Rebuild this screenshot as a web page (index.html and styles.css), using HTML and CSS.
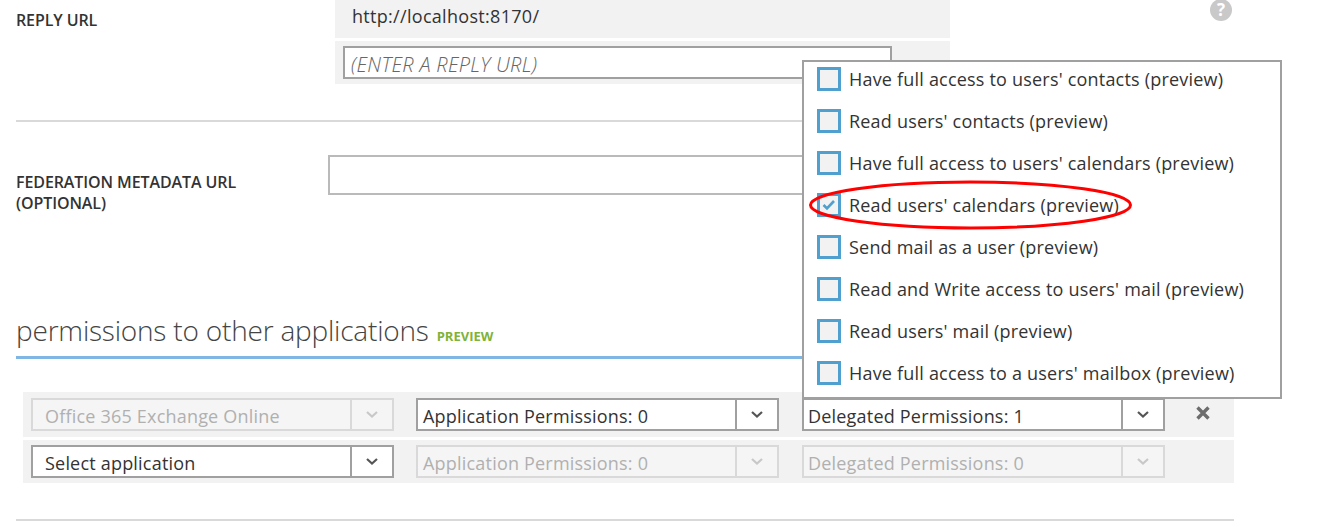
FILE: index.html
```html
<!DOCTYPE html>
<html lang="en">
<head>
  <meta charset="utf-8">
  <title>Configure application</title>
  <link rel="stylesheet" href="styles.css">
</head>
<body>
  <div class="reply-row">
    <div class="field-label reply-label">REPLY URL</div>
    <div class="reply-fields">
      <div class="reply-value">http://localhost:8170/</div>
      <div class="reply-new">
        <input class="reply-input" type="text" placeholder="(ENTER A REPLY URL)">
      </div>
    </div>
    <div class="help-icon">?</div>
  </div>
  <div class="divider"></div>

  <div class="metadata-row">
    <div class="field-label metadata-label">FEDERATION METADATA URL<br>(OPTIONAL)</div>
    <input class="metadata-input" type="text">
  </div>

  <div class="section-head">
    <h2 class="section-title">permissions to other applications</h2>
    <span class="preview-tag">PREVIEW</span>
  </div>

  <div class="perm-row perm-row-first">
    <div class="select select-app disabled">
      <span class="select-text">Office 365 Exchange Online</span>
      <span class="select-arrow"><svg width="14" height="9" viewBox="0 0 14 9"><path d="M2 2l5 4.5L12 2" /></svg></span>
    </div>
    <div class="select">
      <span class="select-text">Application Permissions: 0</span>
      <span class="select-arrow"><svg width="14" height="9" viewBox="0 0 14 9"><path d="M2 2l5 4.5L12 2" /></svg></span>
    </div>
    <div class="select select-delegated">
      <span class="select-text">Delegated Permissions: 1</span>
      <span class="select-arrow"><svg width="14" height="9" viewBox="0 0 14 9"><path d="M2 2l5 4.5L12 2" /></svg></span>
    </div>
    <svg class="remove-icon" width="16" height="16" viewBox="0 0 16 16"><path d="M2.5 2.5l11 11M13.5 2.5l-11 11" /></svg>
  </div>
  <div class="perm-row">
    <div class="select select-app">
      <span class="select-text">Select application</span>
      <span class="select-arrow"><svg width="14" height="9" viewBox="0 0 14 9"><path d="M2 2l5 4.5L12 2" /></svg></span>
    </div>
    <div class="select disabled">
      <span class="select-text">Application Permissions: 0</span>
      <span class="select-arrow"><svg width="14" height="9" viewBox="0 0 14 9"><path d="M2 2l5 4.5L12 2" /></svg></span>
    </div>
    <div class="select select-delegated disabled">
      <span class="select-text">Delegated Permissions: 0</span>
      <span class="select-arrow"><svg width="14" height="9" viewBox="0 0 14 9"><path d="M2 2l5 4.5L12 2" /></svg></span>
    </div>
  </div>
  <div class="divider"></div>

  <div class="perm-menu">
    <div class="menu-item"><span class="check"></span>Have full access to users' contacts (preview)</div>
    <div class="menu-item"><span class="check"></span>Read users' contacts (preview)</div>
    <div class="menu-item"><span class="check"></span>Have full access to users' calendars (preview)</div>
    <div class="menu-item"><span class="check"><svg width="18" height="18" viewBox="0 0 18 18"><path d="M3.5 9l3.5 3.5L14 5" /></svg></span>Read users' calendars (preview)</div>
    <div class="menu-item"><span class="check"></span>Send mail as a user (preview)</div>
    <div class="menu-item"><span class="check"></span>Read and Write access to users' mail (preview)</div>
    <div class="menu-item"><span class="check"></span>Read users' mail (preview)</div>
    <div class="menu-item"><span class="check"></span>Have full access to a users' mailbox (preview)</div>
  </div>
  <svg class="red-ring" width="330" height="54" viewBox="0 0 330 54"><ellipse cx="164.5" cy="27" rx="160" ry="23" /></svg>
</body>
</html>
```

FILE: styles.css
```css
body {
  margin: 0;
  padding-left: 16px;
  position: relative;
  font-family: "Open Sans", "Noto Sans", sans-serif;
  color: #333;
  background: white;
}

.field-label {
  font-size: 16px;
  font-weight: 600;
  line-height: 21px;
  letter-spacing: -0.1px;
  color: #333;
}

.reply-row {
  display: flex;
}
.reply-label {
  width: 319px;
  padding-top: 10px;
}
.reply-fields {
  width: 615px;
}
.reply-value {
  height: 38px;
  box-sizing: border-box;
  padding: 3px 0 0 17px;
  font-size: 18px;
  line-height: 26px;
  letter-spacing: 0.3px;
  background: #f2f2f2;
}
.reply-new {
  height: 43px;
  box-sizing: border-box;
  margin-top: 3px;
  padding: 5px 8px;
  background: #f2f2f2;
}
.reply-input {
  display: block;
  width: 549px;
  height: 33px;
  box-sizing: border-box;
  padding: 3px 6px 0 6px;
  border: 2px solid #a0a0a0;
  border-radius: 0;
  outline: none;
  font-family: inherit;
  font-size: 20px;
  font-weight: 300;
  letter-spacing: 0.3px;
  background: white;
}
.reply-input::placeholder {
  font-style: italic;
  color: #666;
  opacity: 1;
}
.help-icon {
  width: 22px;
  height: 22px;
  margin: -1px 0 0 260px;
  border-radius: 50%;
  background: #c9c9c9;
  color: white;
  font-size: 17px;
  font-weight: 700;
  line-height: 22px;
  text-align: center;
}

.divider {
  width: 1218px;
  height: 2px;
  margin-top: 36px;
  background: #d9d9d9;
}

.metadata-row {
  display: flex;
  margin-top: 33px;
}
.metadata-label {
  width: 312px;
  padding-top: 17px;
}
.metadata-input {
  display: block;
  width: 622px;
  height: 40px;
  box-sizing: border-box;
  border: 2px solid #bababa;
  border-radius: 0;
  outline: none;
}

.section-head {
  display: flex;
  align-items: baseline;
  width: 1218px;
  height: 58px;
  margin-top: 84px;
  border-bottom: 3px solid #7fb6e3;
}
.section-title {
  margin: 0;
  font-size: 28px;
  font-weight: 300;
  line-height: 64px;
  letter-spacing: -0.2px;
  color: #444;
}
.preview-tag {
  margin-left: 8px;
  font-size: 13px;
  font-weight: 700;
  color: #7fb239;
}

.perm-row {
  display: flex;
  align-items: flex-start;
  gap: 22px;
  width: 1211px;
  height: 43px;
  box-sizing: border-box;
  margin: 3px 0 0 7px;
  padding: 5px 8px;
  background: #f2f2f2;
}
.perm-row-first {
  height: 45px;
  margin-top: 33px;
  padding-top: 6px;
}

.select {
  display: flex;
  width: 363px;
  height: 33px;
  box-sizing: border-box;
  border: 2px solid #a0a0a0;
  background: white;
  font-size: 18px;
  letter-spacing: 0.2px;
  line-height: 32px;
}
.select-app .select-text {
  padding-left: 12px;
}
.select-delegated {
  margin-left: 1px;
}
.select-delegated .select-text {
  padding-left: 4px;
}
.select-text {
  flex: 1;
  padding-left: 5px;
  white-space: nowrap;
}
.select-arrow {
  display: flex;
  align-items: center;
  justify-content: center;
  width: 40px;
  border-left: 2px solid #a0a0a0;
}
.select-arrow path {
  fill: none;
  stroke: #555;
  stroke-width: 2.2;
}
.select.disabled {
  border-color: #d9d9d9;
  background: #f5f5f5;
  color: #b0b0b0;
}
.select.disabled .select-arrow {
  border-left-color: #d9d9d9;
}
.select.disabled .select-arrow path {
  stroke: #c8c8c8;
}
.remove-icon {
  margin: 7px 0 0 8px;
}
.remove-icon path {
  fill: none;
  stroke: #6d6d6d;
  stroke-width: 3.4;
}

.perm-menu {
  position: absolute;
  left: 802px;
  top: 60px;
  width: 480px;
  height: 339px;
  box-sizing: border-box;
  padding: 5px 0 0 13px;
  border: 2px solid #a0a0a0;
  background: white;
}
.menu-item {
  display: flex;
  align-items: center;
  gap: 8px;
  height: 24px;
  margin-bottom: 18px;
  font-size: 18px;
  letter-spacing: 0.2px;
  line-height: 22px;
  white-space: nowrap;
}
.check {
  display: flex;
  align-items: center;
  justify-content: center;
  width: 24px;
  height: 24px;
  box-sizing: border-box;
  border: 3px solid #4f9fcf;
  background: #f2f2f2;
}
.check path {
  fill: none;
  stroke: #4f9fcf;
  stroke-width: 2.6;
}

.red-ring {
  position: absolute;
  left: 806px;
  top: 178px;
}
.red-ring ellipse {
  fill: none;
  stroke: red;
  stroke-width: 3;
}
```
